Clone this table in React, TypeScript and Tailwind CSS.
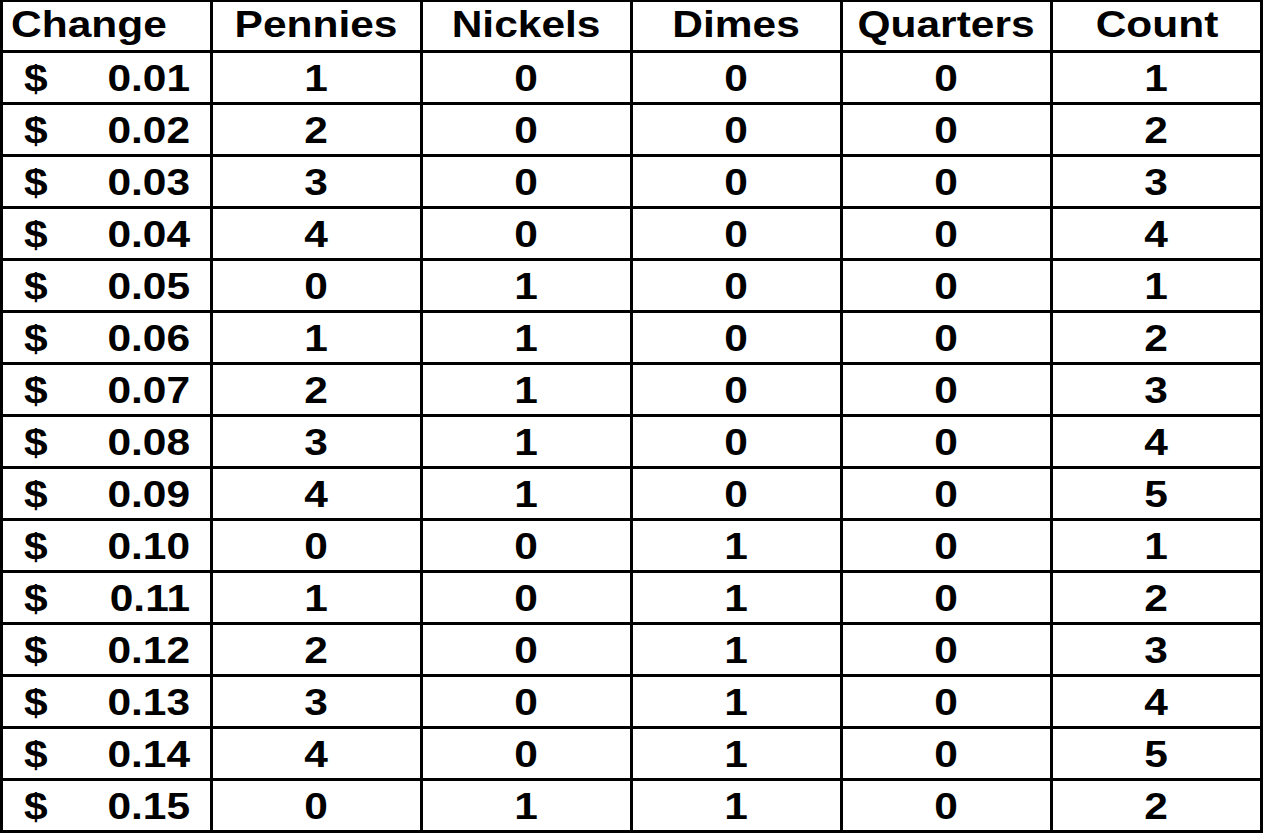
const rows: [string, number, number, number, number, number][] = [
  ['0.01', 1, 0, 0, 0, 1],
  ['0.02', 2, 0, 0, 0, 2],
  ['0.03', 3, 0, 0, 0, 3],
  ['0.04', 4, 0, 0, 0, 4],
  ['0.05', 0, 1, 0, 0, 1],
  ['0.06', 1, 1, 0, 0, 2],
  ['0.07', 2, 1, 0, 0, 3],
  ['0.08', 3, 1, 0, 0, 4],
  ['0.09', 4, 1, 0, 0, 5],
  ['0.10', 0, 0, 1, 0, 1],
  ['0.11', 1, 0, 1, 0, 2],
  ['0.12', 2, 0, 1, 0, 3],
  ['0.13', 3, 0, 1, 0, 4],
  ['0.14', 4, 0, 1, 0, 5],
  ['0.15', 0, 1, 1, 0, 2],
]

const headers = ['Pennies', 'Nickels', 'Dimes', 'Quarters', 'Count']

// text in the sheet is stretched wide, so scale each label horizontally
function Wide({ children, origin = 'origin-center' }: { children: React.ReactNode; origin?: string }) {
  return <span className={`inline-block scale-x-[1.18] ${origin}`}>{children}</span>
}

export default function App() {
  return (
    <div className="min-h-screen bg-white font-['Liberation_Sans',Arial,sans-serif] text-[36px] font-bold leading-[36px] text-black">
      <div className="grid w-[1263px] grid-cols-[repeat(6,207px)] gap-[3px] bg-black px-[3px] pt-[2px] pb-[3px]">
        <div className="flex h-[48px] items-end bg-white pb-[7px] pl-[8px]">
          <Wide origin="origin-left">Change</Wide>
        </div>
        {headers.map((h) => (
          <div key={h} className="flex h-[48px] items-end justify-center bg-white pb-[7px]">
            <Wide>{h}</Wide>
          </div>
        ))}

        {rows.map(([amount, ...counts]) => (
          <>
            <div key={amount} className="flex h-[49px] items-end justify-between bg-white pb-[5px] pl-[21px] pr-[20px]">
              <Wide origin="origin-left">$</Wide>
              <Wide origin="origin-right">{amount}</Wide>
            </div>
            {counts.map((n, i) => (
              <div key={`${amount}-${i}`} className="flex h-[49px] items-end justify-center bg-white pb-[5px]">
                <Wide>{n}</Wide>
              </div>
            ))}
          </>
        ))}
      </div>
    </div>
  )
}
